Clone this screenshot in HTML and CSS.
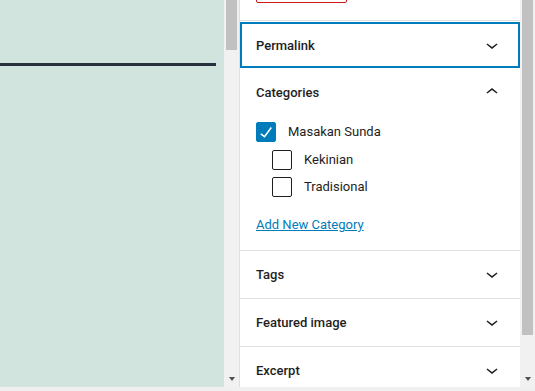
FILE: index.html
```html
<!DOCTYPE html>
<html lang="en">
<head>
    <meta charset="UTF-8">
    <meta name="viewport" content="width=device-width, initial-scale=1.0">
    <title>Post settings</title>
    <link rel="stylesheet" href="styles.css">
</head>
<body>
    <div class="window">
        <div class="canvas">
            <hr class="wide-separator">
        </div>

        <div class="scrollbar">
            <div class="scrollbar-thumb scrollbar-thumb--short"></div>
            <div class="scrollbar-arrow"></div>
        </div>

        <div class="sidebar">
            <div class="panel-top">
                <!-- trash button, scrolled mostly out of view -->
                <button class="trash-button" aria-label="Move to trash"></button>
            </div>

            <div class="panel-body panel-body--focused">
                <button class="panel-toggle is-focused">
                    <span>Permalink</span>
                    <svg class="chevron" viewBox="0 0 24 24" width="24" height="24"><path d="M17.5 11.6L12 16l-5.5-4.4.9-1.2L12 14l4.6-3.6 1 1.2z"/></svg>
                </button>
            </div>

            <div class="panel-body">
                <button class="panel-toggle">
                    <span>Categories</span>
                    <svg class="chevron chevron--up" viewBox="0 0 24 24" width="24" height="24"><path d="M6.5 12.4L12 8l5.5 4.4-.9 1.2L12 10l-4.6 3.6-1-1.2z"/></svg>
                </button>
                <div class="panel-content">
                    <ul class="category-list">
                        <li class="category">
                            <span class="checkbox is-checked">
                                <svg viewBox="0 0 24 24" width="24" height="24"><path d="M16.7 7.1l-6.3 8.5-3.2-2.4-.9 1.2 4.4 3.4 7.2-9.7z"/></svg>
                            </span>
                            <span class="category-label">Masakan Sunda</span>
                        </li>
                        <li class="category category--child">
                            <span class="checkbox"></span>
                            <span class="category-label">Kekinian</span>
                        </li>
                        <li class="category category--child">
                            <span class="checkbox"></span>
                            <span class="category-label">Tradisional</span>
                        </li>
                    </ul>
                    <a href="#" class="add-category">Add New Category</a>
                </div>
            </div>

            <div class="panel-body">
                <button class="panel-toggle">
                    <span>Tags</span>
                    <svg class="chevron" viewBox="0 0 24 24" width="24" height="24"><path d="M17.5 11.6L12 16l-5.5-4.4.9-1.2L12 14l4.6-3.6 1 1.2z"/></svg>
                </button>
            </div>

            <div class="panel-body">
                <button class="panel-toggle">
                    <span>Featured image</span>
                    <svg class="chevron" viewBox="0 0 24 24" width="24" height="24"><path d="M17.5 11.6L12 16l-5.5-4.4.9-1.2L12 14l4.6-3.6 1 1.2z"/></svg>
                </button>
            </div>

            <div class="panel-body">
                <button class="panel-toggle">
                    <span>Excerpt</span>
                    <svg class="chevron" viewBox="0 0 24 24" width="24" height="24"><path d="M17.5 11.6L12 16l-5.5-4.4.9-1.2L12 14l4.6-3.6 1 1.2z"/></svg>
                </button>
            </div>
        </div>

        <div class="scrollbar">
            <div class="scrollbar-thumb scrollbar-thumb--long"></div>
            <div class="scrollbar-arrow"></div>
        </div>
    </div>
    <div class="bottom-strip"></div>
</body>
</html>
```

FILE: styles.css
```css
body, html {
    height: 100%;
    margin: 0;
    overflow: hidden;
    font-family: Roboto, 'Noto Sans', sans-serif;
    background-color: #f0f0f0;
}

body {
    display: flex;
    flex-direction: column;
}

.window {
    display: flex;
    height: 387px;
}

.bottom-strip {
    height: 4px;
    background-color: #f0f0f0;
}

/* editor canvas on the left */
.canvas {
    width: 224px;
    background-color: #d1e4dd;
    overflow: hidden;
}

.wide-separator {
    width: 216px;
    height: 3px;
    margin: 63px 0 0 0;
    border: 0;
    background-color: #28303d;
}

/* fake scrollbars */
.scrollbar {
    width: 15px;
    background-color: #f1f1f1;
    display: flex;
    flex-direction: column;
    align-items: center;
}

.scrollbar-thumb {
    width: 11px;
    background-color: #c1c1c1;
}

.scrollbar-thumb--short {
    height: 50px;
}

.scrollbar-thumb--long {
    height: 335px;
}

.scrollbar-arrow {
    margin-top: auto;
    margin-bottom: 6px;
    width: 0;
    height: 0;
    border-top: 4px solid #505050;
    border-left: 3.5px solid transparent;
    border-right: 3.5px solid transparent;
}

/* settings sidebar */
.sidebar {
    width: 280px;
    border-left: 1px solid #e0e0e0;
    background-color: white;
    display: flex;
    flex-direction: column;
    overflow: hidden;
    color: #1e1e1e;
}

.panel-top {
    box-sizing: border-box;
    flex: none;
    height: 21px;
    padding: 0 16px 17px 16px;
    border-bottom: 1px solid #e0e0e0;
    display: flex;
    align-items: flex-end;
    overflow: hidden;
}

.trash-button {
    flex: none;
    width: 91px;
    height: 36px;
    border: 1px solid #cc1818;
    border-radius: 2px;
    background-color: white;
}

.panel-body {
    flex: none;
    border-bottom: 1px solid #e0e0e0;
}

.panel-body--focused {
    border-bottom: 0;
    padding-top: 1px;
}

.panel-toggle {
    box-sizing: border-box;
    width: 100%;
    height: 47px;
    padding: 0 16px;
    border: 0;
    background: none;
    display: flex;
    align-items: center;
    justify-content: space-between;
    font-family: inherit;
    font-size: 13px;
    font-weight: 500;
    color: #1e1e1e;
    text-align: left;
}

.panel-toggle.is-focused {
    height: 46px;
    box-shadow: inset 0 0 0 2px #007cba;
}

.panel-body--focused + .panel-body .panel-toggle {
    height: 48px;
}

.chevron {
    fill: #1e1e1e;
    margin-top: -1px;
}

.chevron--up {
    margin-top: 0;
}

.panel-content {
    padding: 6px 16px 15px 16px;
}

.category-list {
    list-style: none;
    margin: 0;
    padding: 0;
    display: flex;
    flex-direction: column;
    gap: 7.5px;
}

.category {
    display: flex;
    align-items: center;
    gap: 12px;
    font-size: 13px;
    height: 20px;
}

.category--child {
    padding-left: 16px;
}

.checkbox {
    box-sizing: border-box;
    width: 20px;
    height: 20px;
    border: 1px solid #1e1e1e;
    border-radius: 2px;
    background-color: white;
    display: flex;
    align-items: center;
    justify-content: center;
}

.checkbox.is-checked {
    border-color: #007cba;
    background-color: #007cba;
}

.checkbox svg {
    flex: none;
    fill: white;
}

.category-label {
    line-height: 20px;
}

.add-category {
    display: inline-block;
    margin-top: 18px;
    font-size: 13px;
    line-height: 20px;
    color: #007cba;
    text-decoration: underline;
}
```
